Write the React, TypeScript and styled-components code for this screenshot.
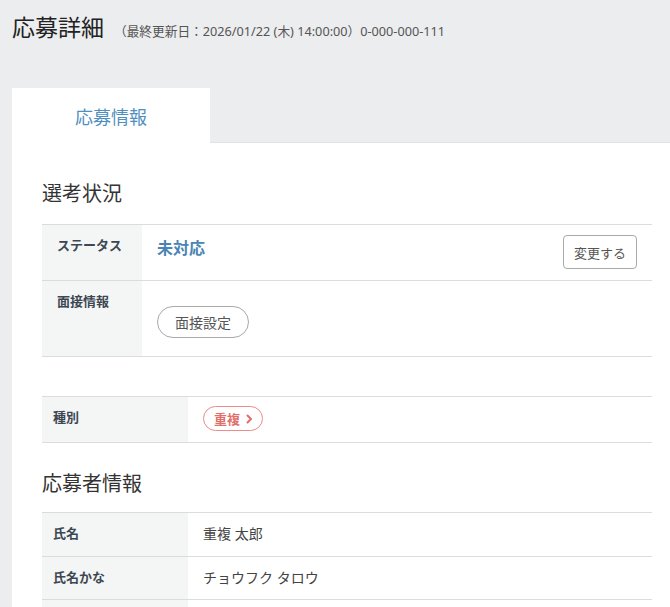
import React from 'react';
import styled, { createGlobalStyle } from 'styled-components';

const GlobalStyle = createGlobalStyle`
  html, body {
    margin: 0;
    padding: 0;
    background: #ecedef;
    font-family: "Noto Sans", "Noto Sans CJK JP", sans-serif;
    color: #333;
  }
  * { box-sizing: border-box; }
`;

const Page = styled.div`
  padding: 0 0 0 12px;
  overflow: hidden;
`;

const Header = styled.header`
  display: flex;
  align-items: baseline;
  gap: 10px;
  height: 88px;
  padding-top: 11px;
`;

const PageTitle = styled.h1`
  margin: 0;
  font-size: 23px;
  font-weight: 400;
  line-height: 32px;
  color: #222;
`;

const Meta = styled.span`
  font-size: 12.7px;
  color: #555;
`;

const Tabs = styled.nav`
  display: flex;
  border-bottom: 1px solid #e2e3e5;
`;

const Tab = styled.div<{ $active?: boolean }>`
  width: 198px;
  height: 55px;
  display: flex;
  align-items: center;
  justify-content: center;
  font-size: 18px;
  color: #4f8fc0;
  background: ${p => (p.$active ? '#fff' : 'transparent')};
  margin-bottom: -1px;
`;

const Panel = styled.section`
  background: #fff;
  padding: 36px 18px 40px 30px;
  width: 680px;
`;

const SectionTitle = styled.h2<{ $top?: number; $bottom?: number }>`
  margin: ${p => p.$top ?? 0}px 0 ${p => p.$bottom ?? 15}px;
  font-size: 20px;
  font-weight: 400;
  line-height: 30px;
  color: #333;
`;

const Table = styled.div<{ $gapAfter?: number }>`
  width: 610px;
  border-bottom: 1px solid #dcdcdc;
  margin-bottom: ${p => p.$gapAfter ?? 0}px;
`;

const Row = styled.div<{ $labelWidth: number; $height: number }>`
  display: grid;
  grid-template-columns: ${p => p.$labelWidth}px 1fr;
  min-height: ${p => p.$height}px;
  border-top: 1px solid #dcdcdc;
`;

const Label = styled.div<{ $indent?: number }>`
  background: #f4f5f5;
  padding: 11px ${p => p.$indent ?? 11}px;
  font-size: 13px;
  font-weight: 700;
  line-height: 18px;
  color: #3c4752;
`;

const Value = styled.div<{ $pad?: string }>`
  display: flex;
  align-items: flex-start;
  justify-content: space-between;
  padding: ${p => p.$pad ?? '11px 15px'};
  font-size: 14px;
  line-height: 20px;
  color: #444;
`;

const StatusText = styled.span`
  margin-top: 1px;
  font-size: 16px;
  font-weight: 700;
  line-height: 24px;
  color: #4a84b4;
`;

const OutlineButton = styled.button`
  height: 34px;
  padding: 0 10px;
  border: 1px solid #a9a9a9;
  border-radius: 4px;
  background: #fff;
  font-family: inherit;
  font-size: 13px;
  color: #555;
`;

const PillButton = styled.button`
  height: 32px;
  width: 92px;
  border: 1px solid #a9a9a9;
  border-radius: 16px;
  background: #fff;
  font-family: inherit;
  font-size: 14px;
  color: #555;
`;

const Badge = styled.span`
  display: inline-flex;
  align-items: center;
  gap: 6px;
  height: 25px;
  padding: 0 9px 0 10px;
  border: 1px solid #ea8c8a;
  border-radius: 13px;
  font-size: 13px;
  font-weight: 700;
  color: #e26e6b;
`;

const Chevron = () => (
  <svg width="7" height="10" viewBox="0 0 7 10" fill="none">
    <path d="M1.5 1.5 L5 5 L1.5 8.5" stroke="#e26e6b" strokeWidth="2" strokeLinecap="round" strokeLinejoin="round" />
  </svg>
);

export default function App() {
  return (
    <>
      <GlobalStyle />
      <Page>
        <Header>
          <PageTitle>応募詳細</PageTitle>
          <Meta>（最終更新日：2026/01/22 (木) 14:00:00）0-000-000-111</Meta>
        </Header>
        <Tabs>
          <Tab $active>応募情報</Tab>
        </Tabs>
        <Panel>
          <SectionTitle>選考状況</SectionTitle>
          <Table $gapAfter={39}>
            <Row $labelWidth={100} $height={56}>
              <Label $indent={15}>ステータス</Label>
              <Value $pad="10px 15px 11px">
                <StatusText>未対応</StatusText>
                <OutlineButton>変更する</OutlineButton>
              </Value>
            </Row>
            <Row $labelWidth={100} $height={76}>
              <Label $indent={15}>面接情報</Label>
              <Value $pad="25px 15px 17px">
                <PillButton>面接設定</PillButton>
              </Value>
            </Row>
          </Table>

          <Table>
            <Row $labelWidth={146} $height={46}>
              <Label>種別</Label>
              <Value $pad="9px 15px">
                <Badge>
                  重複
                  <Chevron />
                </Badge>
              </Value>
            </Row>
          </Table>

          <SectionTitle $top={26} $bottom={13}>応募者情報</SectionTitle>
          <Table>
            <Row $labelWidth={146} $height={44}>
              <Label>氏名</Label>
              <Value>重複 太郎</Value>
            </Row>
            <Row $labelWidth={146} $height={43}>
              <Label>氏名かな</Label>
              <Value>チョウフク タロウ</Value>
            </Row>
            <Row $labelWidth={146} $height={43}>
              <Label>メールアドレス</Label>
              <Value>chofuku@example.com</Value>
            </Row>
          </Table>
        </Panel>
      </Page>
    </>
  );
}
